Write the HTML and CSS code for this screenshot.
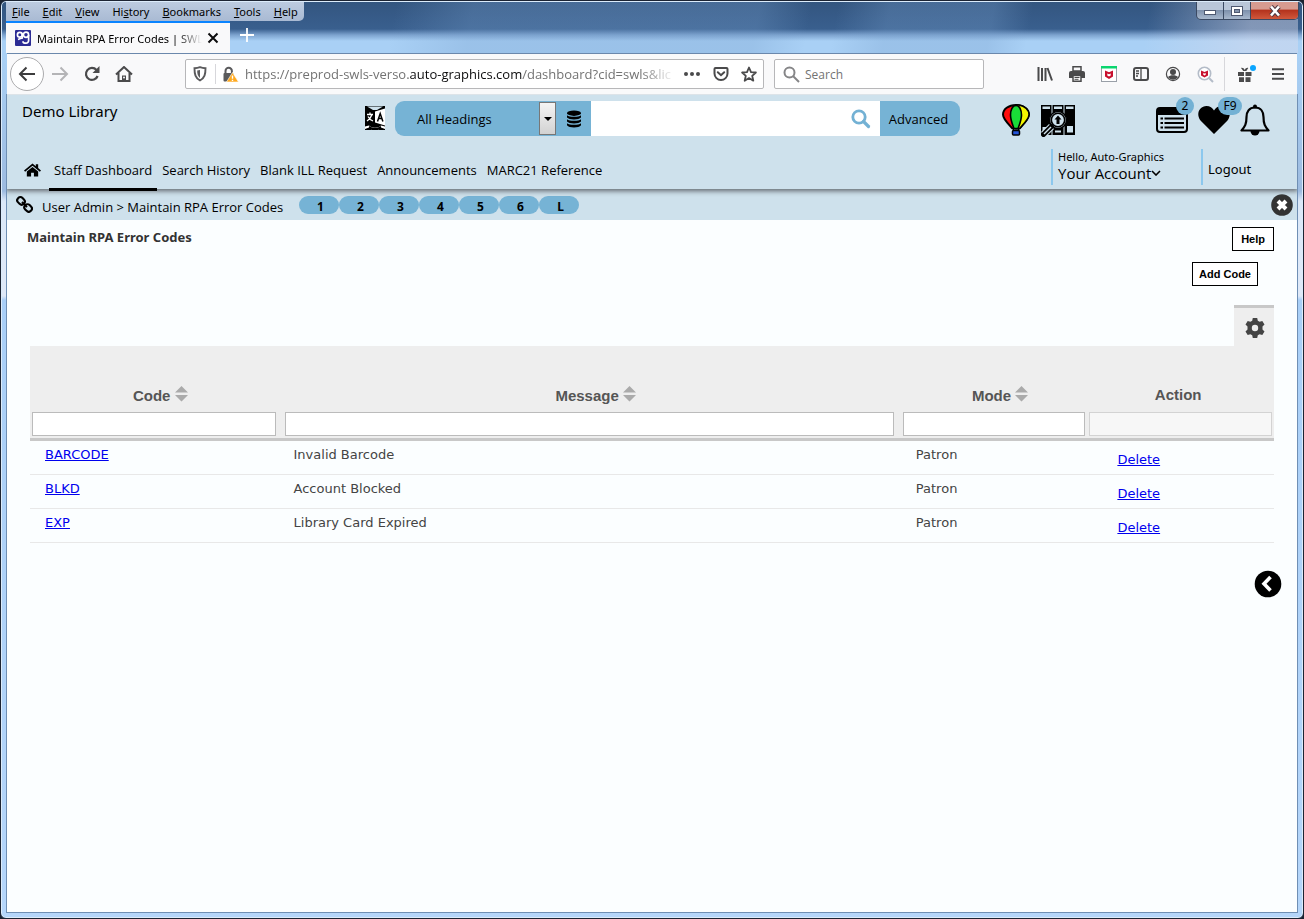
FILE: index.html
```html
<!DOCTYPE html>
<html lang="en">
<head>
<meta charset="utf-8">
<title>Maintain RPA Error Codes | SWLS</title>
<link rel="stylesheet" href="styles.css">
</head>
<body>
<div class="window">
  <div class="titlebar">
    <div class="title-left">
      <nav class="menubar" aria-label="Menu">
        <button><u>F</u>ile</button><button><u>E</u>dit</button><button><u>V</u>iew</button><button>Hi<u>s</u>tory</button><button><u>B</u>ookmarks</button><button><u>T</u>ools</button><button><u>H</u>elp</button>
      </nav>
      <div class="tabs">
        <div class="tab">
          <svg class="favicon" width="16" height="16" viewBox="0 0 16 16"><rect width="16" height="16" rx="1" fill="#2b2b94"/><g fill="none" stroke="#fff" stroke-width="1.7"><circle cx="4.8" cy="4.8" r="2.4"/><circle cx="11" cy="4.8" r="2.6"/><path d="M7 3.2c1 2.6 1 3.4-.2 4.8M13.6 5v5.500a2.600 2.600 0 0 1-2.600 2.700H9.800a2 2 0 0 1-1.800-2M3 9.500c1.500-.8 3-1.300 5-1.500"/></g></svg>
          <span class="tab-title">Maintain RPA Error Codes | SWL</span>
          <button class="tab-close" aria-label="Close tab"><svg width="12" height="12" viewBox="0 0 12 12"><path d="M1.500 1.500l9 9M10.500 1.500l-9 9" stroke="#0c0c0d" stroke-width="2"/></svg></button>
        </div>
        <button class="new-tab" aria-label="New tab"><svg width="14" height="14" viewBox="0 0 14 14"><path d="M7 0v14M0 7h14" stroke="#fff" stroke-width="1.800"/></svg></button>
      </div>
    </div>
    <div class="winbtns">
      <button aria-label="Minimize"><svg width="14" height="12" viewBox="0 0 14 12"><rect x="1.500" y="5.500" width="11" height="4" fill="#fff" stroke="#4e5870"/></svg></button>
      <button aria-label="Maximize"><svg width="14" height="12" viewBox="0 0 14 12"><rect x="1.500" y="1.500" width="11" height="9" fill="#fff" stroke="#4e5870"/><rect x="4.500" y="4.500" width="5" height="3" fill="#8493ac" stroke="#4e5870"/></svg></button>
      <button class="win-close" aria-label="Close"><svg width="14" height="12" viewBox="0 0 14 12"><path d="M3 1.500l8 9M11 1.500l-8 9" stroke="#4e3a44" stroke-width="4.600"/><path d="M3 1.500l8 9M11 1.500l-8 9" stroke="#fff" stroke-width="2.600"/></svg></button>
    </div>
  </div>

  <div class="toolbar">
    <button class="back" aria-label="Back"><svg width="18" height="16" viewBox="0 0 18 16"><path d="M17 8H2.500M8.500 1.500L2 8l6.500 6.500" fill="none" stroke="#3c3c3d" stroke-width="2"/></svg></button>
    <button class="tool" aria-label="Forward"><svg width="18" height="16" viewBox="0 0 18 16"><path d="M1 8h14.500M9.500 1.500L16 8l-6.500 6.500" fill="none" stroke="#b4b4b6" stroke-width="2"/></svg></button>
    <button class="tool" aria-label="Reload"><svg width="16" height="16" viewBox="0 0 16 16"><path d="M13.600 10A6 6 0 1 1 12.500 4" fill="none" stroke="#4a4a4b" stroke-width="2.200"/><path d="M15.500 0v7h-7z" fill="#4a4a4b"/></svg></button>
    <button class="tool" aria-label="Home"><svg width="18" height="16" viewBox="0 0 18 16"><path d="M1 8.500l8-7.500 8 7.500M3.500 7v8h11V7" fill="none" stroke="#4a4a4b" stroke-width="2"/><path d="M7 15V9.500h4V15z" fill="#4a4a4b"/><circle cx="9" cy="11.500" r="1" fill="#f9f9fa"/></svg></button>
    <div class="urlbar">
      <svg width="14" height="16" viewBox="0 0 14 16"><path d="M7 1.200c2 .8 3.600 1 5.500 1 0 6-.8 9.800-5.500 12.300C2.300 12 1.500 8.200 1.500 2.200c1.900 0 3.500-.2 5.500-1z" fill="none" stroke="#5a5a5c" stroke-width="1.900"/><path d="M7 4v8C4.800 10.500 4.200 8 4.200 4.600z" fill="#5a5a5c"/></svg>
      <span class="url-sep"></span>
      <svg width="17" height="17" viewBox="0 0 17 17"><path d="M3.500 8V5a3.200 3.200 0 0 1 6.400 0v2" fill="none" stroke="#5a5a5c" stroke-width="2"/><rect x="1.500" y="7" width="10" height="8.500" rx="1" fill="#5a5a5c"/><path d="M10.500 6.500L16.500 16h-12z" fill="#ffa91e" stroke="#fff" stroke-width=".6"/><path d="M10.500 9.500v3.300M10.500 13.800v1.200" stroke="#fff" stroke-width="1.400"/></svg>
      <span class="url-text">https://preprod-swls-verso.<b>auto-graphics.com</b>/dashboard?cid=swls&amp;lic</span>
      <svg width="18" height="6" viewBox="0 0 18 6"><g fill="#4a4a4b"><circle cx="3" cy="3" r="2"/><circle cx="9" cy="3" r="2"/><circle cx="15" cy="3" r="2"/></g></svg>
      <svg width="16" height="16" viewBox="0 0 16 16"><path d="M2.500 2h11c.6 0 1 .4 1 1v4.500a6.500 6.500 0 0 1-13 0V3c0-.6.4-1 1-1z" fill="none" stroke="#4a4a4b" stroke-width="2"/><path d="M4.800 6.200L8 9.200l3.200-3" fill="none" stroke="#4a4a4b" stroke-width="2" stroke-linecap="round"/></svg>
      <svg width="16" height="16" viewBox="0 0 16 16"><path d="M8 1.500l2 4.600 4.900.4-3.700 3.300 1.100 4.900L8 12.100l-4.300 2.600 1.100-4.900L1.100 6.500 6 6.100z" fill="none" stroke="#4a4a4b" stroke-width="1.800" stroke-linejoin="round"/></svg>
    </div>
    <div class="findbar">
      <svg width="17" height="17" viewBox="0 0 17 17"><circle cx="6.500" cy="6.500" r="5" fill="none" stroke="#858587" stroke-width="2"/><path d="M10 10l6 6" stroke="#858587" stroke-width="2"/></svg>
      <input type="text" placeholder="Search" aria-label="Search the web">
    </div>
    <div class="ext">
      <svg width="16" height="16" viewBox="0 0 16 16"><path d="M1.500 1v14M5 2v13M8.500 2v13M10.500 2l4.500 12.500" stroke="#4a4a4b" stroke-width="2"/></svg>
      <svg width="16" height="16" viewBox="0 0 16 16"><path d="M4 .7h8V5H4z" fill="none" stroke="#4a4a4b" stroke-width="1.500"/><path d="M2 5h12a2 2 0 0 1 2 2v5H0V7a2 2 0 0 1 2-2z" fill="#4a4a4b"/><path d="M4 9.500h8v5.700H4z" fill="#fff" stroke="#4a4a4b" stroke-width="1.500"/><path d="M5.500 11.500h5M5.500 13.300h4" stroke="#4a4a4b"/></svg>
      <svg width="16" height="16" viewBox="0 0 16 16"><rect x=".5" y=".5" width="15" height="15" fill="#fff" stroke="#9aa0a8"/><path d="M0 0h16v2.500H0z" fill="#0bd66f"/><path d="M4 4.500l4 1.800 4-1.800v6L8 13l-4-2.500z" fill="#c8102e"/><path d="M6.300 7.500L8 8.300l1.700-.8v2L8 10.400l-1.700-.9z" fill="#fff"/></svg>
      <svg width="16" height="14" viewBox="0 0 16 14"><rect x="1" y="1" width="14" height="12" rx="2" fill="none" stroke="#4a4a4b" stroke-width="2"/><path d="M8 1v12M3 4h3M3 6.500h3M3 9h2" stroke="#4a4a4b" stroke-width="1.300"/></svg>
      <svg width="16" height="16" viewBox="0 0 16 16"><circle cx="8" cy="8" r="6.600" fill="none" stroke="#4a4a4b" stroke-width="1.200"/><circle cx="8" cy="6" r="3" fill="#4a4a4b"/><path d="M3 11c2-2.500 8-2.500 10 0-2.500 3.500-7.500 3.500-10 0z" fill="#4a4a4b"/></svg>
      <svg width="17" height="17" viewBox="0 0 17 17"><circle cx="7.500" cy="7.500" r="6.200" fill="#fff" stroke="#b4bcc8" stroke-width="1.600"/><path d="M12 12l4 4" stroke="#b4bcc8" stroke-width="2"/><path d="M4 4.500l3.500 1.500L11 4.500v5L7.500 11.500 4 9.500z" fill="#c8102e"/><path d="M6.300 7l1.200.6L8.700 7v1.800l-1.200.7-1.200-.7z" fill="#fff"/></svg>
      <span class="ext-sep"></span>
      <svg class="gift" width="19" height="18" viewBox="0 0 19 18"><path d="M1 7h6v4H1zM8.500 7h6v4h-6zM2 12.200h5V17H2zM8.500 12.200h5V17h-5z" fill="#4a4a4b"/><path d="M4 3c1.500-.6 3 .3 3.700 2C8.400 3.300 10 2.400 11.300 3l-2 3h-3z" fill="#4a4a4b"/><circle cx="16" cy="3" r="3" fill="#0aa5ff"/></svg>
      <svg width="14" height="12" viewBox="0 0 14 12"><path d="M1 1.200h12M1 6h12M1 10.800h12" stroke="#4a4a4b" stroke-width="2"/></svg>
    </div>
  </div>

  <div class="page">
    <header class="app-head">
      <div class="head-top">
        <div class="brand">Demo Library</div>
        <button class="translate" aria-label="Translate"><svg width="22" height="26" viewBox="0 0 22 26"><path d="M1 1h20v24H1z"/><path d="M3 1.500h16L13 5H9z" fill="#cee1ec"/><path d="M11 6.500l10-3v17l-10-3z" fill="#fff"/><path d="M1 21.500l4-1c3 3 9 3 12 0l4 1V24l-4-1.500-3 2.500H8l-3-2.500L1 24z" fill="#fff"/><path d="M5 21c4 2.500 8 2.500 12 0v2.500l-3 1.500H8l-3-1.500z"/><path d="M13.500 16.500l2.700-8 2.700 8M14.500 13.500h3.500" fill="none" stroke="#000" stroke-width="1.500"/><path d="M3 9.500h6M6 7.500v2M8 9.500c-1 3-2.500 5-5 6.500M4 11.500c1 2 2.500 3.500 5 4.500" fill="none" stroke="#fff" stroke-width="1.300"/></svg></button>
        <form class="search">
          <button type="button" class="headings">All Headings<span class="drop"></span></button>
          <button type="button" class="db" aria-label="Databases"><svg width="16" height="18" viewBox="0 0 16 18"><ellipse cx="8" cy="3.200" rx="7" ry="2.700"/><path d="M1 5.200c2 2.200 12 2.200 14 0v2.300c-2 2.600-12 2.600-14 0zM1 9.200c2 2.200 12 2.200 14 0v2.300c-2 2.600-12 2.600-14 0zM1 13.200c2 2.200 12 2.200 14 0v2c-2 3-12 3-14 0z"/></svg></button>
          <input type="text" aria-label="Catalog search">
          <button type="button" class="go" aria-label="Search"><svg width="20" height="20" viewBox="0 0 20 20"><circle cx="8" cy="8" r="6.200" fill="none" stroke="#73b1d4" stroke-width="2.800"/><path d="M12.500 12.500l5 5" stroke="#73b1d4" stroke-width="3.200" stroke-linecap="round"/></svg></button>
          <button type="button" class="advanced">Advanced</button>
        </form>
        <div class="icons-a">
          <svg width="28" height="32" viewBox="0 0 28 32"><path d="M14 1C6.500 1 1 5.200 1 10.500c0 4.500 4.500 8.500 9.500 14h7c5-5.500 9.500-9.500 9.500-14C27 5.200 21.500 1 14 1z" fill="#ff0d0d" stroke="#000" stroke-width="2"/><path d="M14 1h3c6 1 10 5 10 9.500 0 4.500-4.500 8.500-9.500 14H14z" fill="#f3f500" stroke="#000" stroke-width="1.500"/><path d="M14 1.500c-3.500 0-5.500 4.500-5.500 9.500 0 5 2 9.500 3.500 13.500h4c1.500-4 3.500-8.500 3.500-13.500 0-5-2-9.500-5.500-9.500z" fill="#19dc37" stroke="#000" stroke-width="1.600"/><path d="M11.500 24v3M16.500 24v3" stroke="#000"/><rect x="10.500" y="26.500" width="7" height="4.500" rx="1" fill="#2353d8" stroke="#000" stroke-width="1.500"/></svg>
          <svg width="34" height="33" viewBox="0 0 34 33"><path d="M0 1h10.500v30H0zM11.500 1h11v30h-11zM23.500 1H34v30H23.500z"/><path d="M1.500 2.500H9V5H1.500zM13 2.500h8V5h-8zM25 2.500h7.500V5H25zM1.500 23H7v5H1.500zM26 22h6v6.500h-6zM14 26.500h6v2h-6z" fill="#cee1ec"/><circle cx="17" cy="16" r="8.500" fill="#cee1ec" stroke="#000" stroke-width="1.500"/><circle cx="17" cy="16" r="6.700" fill="#cee1ec" stroke="#000" stroke-width="1.600"/><path d="M17 11.500l3.500 4h-2V20h-3v-4.500h-2z"/><path d="M10.500 22.500L2.500 30.500" stroke="#cee1ec" stroke-width="7"/><path d="M10.500 22.500L2.500 30.500" stroke="#000" stroke-width="5" stroke-linecap="round"/><path d="M10 23l-7 7" stroke="#cee1ec" stroke-width="1.500"/></svg>
        </div>
        <div class="icons-b">
          <button class="badged" aria-label="Lists"><svg width="32" height="26" viewBox="0 0 32 26"><rect x="1" y="1" width="30" height="24" rx="3" fill="none" stroke="#000" stroke-width="2"/><path d="M1 3q0-2 2-2h26q2 0 2 2v5H1z"/><path d="M8.500 11.500H28M8.500 16H28M8.500 20.500H28" stroke="#000" stroke-width="2"/><path d="M4.500 11.500h2.500M4.500 16h2.500M4.500 20.500h2.500" stroke="#000" stroke-width="2"/></svg><span class="badge">2</span></button>
          <button class="badged heart" aria-label="Favorites"><svg width="32" height="28" viewBox="0 0 32 28"><path d="M16 28L2.500 14.500C-2.500 8 1.500 0 8.500 0 12 0 14.500 1.800 16 4.500 17.500 1.800 20 0 23.500 0c7 0 11 8 6 14.500z"/></svg><span class="badge wide">F9</span></button>
          <button class="badged" aria-label="Notifications"><svg width="30" height="32" viewBox="0 0 30 32"><path d="M15 3.500c-6 0-8.500 4.500-8.500 9.500 0 7-1.500 9.500-5 13.500h27c-3.500-4-5-6.500-5-13.500 0-5-2.500-9.500-8.500-9.500z" fill="none" stroke="#000" stroke-width="2.200" stroke-linejoin="round"/><circle cx="15" cy="2.500" r="2"/><path d="M10.500 27h9a4.500 4.500 0 0 1-9 0z"/></svg></button>
        </div>
      </div>
      <div class="head-nav">
        <nav class="links" aria-label="Main">
          <a class="home" href="#" aria-label="Home"><svg width="17" height="14" viewBox="0 0 18 14"><path d="M9 0L0 7.500l1.200 1.300L9 2.400l7.800 6.400L18 7.500l-3-2.500V.8h-2.500V3z"/><path d="M9 3.800L3 8.700V14h4.500V9.800h3V14H15V8.700z"/></svg></a>
          <a class="current" href="#">Staff Dashboard</a><a href="#">Search History</a><a href="#">Blank ILL Request</a><a href="#">Announcements</a><a href="#">MARC21 Reference</a>
        </nav>
        <div class="account"><span class="hello">Hello, Auto-Graphics</span><a href="#">Your Account<svg width="10" height="6" viewBox="0 0 10 6"><path d="M1 1l4 4 4-4" fill="none" stroke="#000" stroke-width="1.600"/></svg></a></div>
        <div class="logout"><a href="#">Logout</a></div>
      </div>
    </header>

    <div class="crumbs">
      <svg width="17" height="17" viewBox="0 0 17 17"><g fill="none" stroke="#000" stroke-width="2.100" transform="rotate(45 8.500 8.500)"><rect x="-.5" y="5.300" width="8" height="6.200" rx="3"/><rect x="9.500" y="5.300" width="8" height="6.200" rx="3"/><path d="M5 8.500h7"/></g></svg>
      <span class="trail"><a href="#">User Admin</a> &gt; <a href="#">Maintain RPA Error Codes</a></span>
      <div class="pills"><button>1</button><button>2</button><button>3</button><button>4</button><button>5</button><button>6</button><button>L</button></div>
      <button class="close" aria-label="Close"><svg width="22" height="22" viewBox="0 0 22 22"><circle cx="11" cy="11" r="10.800" fill="#333"/><path d="M7 7l8 8M15 7l-8 8" stroke="#fff" stroke-width="4"/></svg></button>
    </div>

    <main class="content">
      <div class="title-row"><h1>Maintain RPA Error Codes</h1><button class="box">Help</button></div>
      <div class="add-row"><button class="box">Add Code</button></div>
      <div class="gear-row"><button class="gear" aria-label="Table settings"><svg width="20" height="20" viewBox="0 0 20 20"><path fill="#444" fill-rule="evenodd" d="M7.800 0h4.400l.6 2.700 1.800 1 2.700-.8 2.200 3.700-2 2v2.800l2 2-2.200 3.700-2.700-.8-1.800 1-.6 2.700H7.800l-.6-2.700-1.800-1-2.700.8-2.200-3.700 2-2V8.600l-2-2 2.200-3.700 2.700.8 1.800-1zM10 6.800a3.200 3.200 0 1 0 0 6.400 3.200 3.200 0 0 0 0-6.400z"/></svg></button></div>
      <table class="codes">
        <colgroup><col class="c-code"><col class="c-msg"><col class="c-mode"><col class="c-act"></colgroup>
        <thead>
          <tr class="names">
            <th>Code <svg width="13" height="16" viewBox="0 0 13 16"><path d="M6.500 0L13 6.500H0zM0 9h13l-6.500 6.500z" fill="#aaa"/></svg></th>
            <th>Message <svg width="13" height="16" viewBox="0 0 13 16"><path d="M6.500 0L13 6.500H0zM0 9h13l-6.500 6.500z" fill="#aaa"/></svg></th>
            <th class="mode">Mode <svg width="13" height="16" viewBox="0 0 13 16"><path d="M6.500 0L13 6.500H0zM0 9h13l-6.500 6.500z" fill="#aaa"/></svg></th>
            <th class="plain">Action</th>
          </tr>
          <tr class="filters">
            <td><input type="text" aria-label="Filter code"></td>
            <td><input type="text" aria-label="Filter message"></td>
            <td class="tight"><input type="text" aria-label="Filter mode"></td>
            <td class="tight"><input type="text" aria-label="Filter action" disabled></td>
          </tr>
        </thead>
        <tbody>
          <tr><td><a href="#">BARCODE</a></td><td>Invalid Barcode</td><td>Patron</td><td class="act"><a href="#">Delete</a></td></tr>
          <tr><td><a href="#">BLKD</a></td><td>Account Blocked</td><td>Patron</td><td class="act"><a href="#">Delete</a></td></tr>
          <tr><td><a href="#">EXP</a></td><td>Library Card Expired</td><td>Patron</td><td class="act"><a href="#">Delete</a></td></tr>
        </tbody>
      </table>
      <div class="side-row"><button aria-label="Open side panel"><svg width="28" height="28" viewBox="0 0 28 28"><circle cx="14" cy="14" r="13.300"/><path d="M16.500 7L10 13.800l6.500 6.800" fill="none" stroke="#fff" stroke-width="3.600"/></svg></button></div>
    </main>
  </div>
</div>
</body>
</html>
```
FILE: styles.css
```css
* { box-sizing: border-box; }
body {
  margin: 0;
  min-height: 100vh;
  display: flex;
  background: #1a2230;
  font-family: "Noto Sans", "Open Sans", sans-serif;
  font-size: 12px;
  color: #000;
}
button { border: 0; padding: 0; background: none; font: inherit; color: inherit; }
svg { display: block; flex: none; }
a { color: inherit; text-decoration: none; }

.window {
  flex: 1;
  display: flex;
  flex-direction: column;
  padding: 0 5px 5px;
  border: 1px solid #1c2433;
  border-radius: 6px;
  box-shadow: inset 0 0 0 1px #dcecfb;
  background: linear-gradient(#33557f 0, #395f8e 28px, #7da3cf 34px, #a9d0f5 40px, #a9d0f5 56px, #9dbbe0 190px, #dbe8f8 200px, #dfe9f8 295px, #a9cff7 299px, #b5d6fa 100%);
}

/* window chrome */
.titlebar {
  display: flex;
  justify-content: space-between;
  align-items: flex-start;
  height: 51px;
  margin-top: 1px;
  background: linear-gradient(100deg, transparent 0 30%, rgba(120, 160, 205, .3) 36% 58%, transparent 62% 64%, rgba(120, 160, 205, .3) 68% 76%, transparent 79% 88%, rgba(220, 220, 235, .45) 96%);
}
.title-left { display: flex; flex-direction: column; height: 51px; }
.menubar {
  display: flex;
  gap: 1px;
  align-self: flex-start;
  height: 19px;
  border-radius: 0 0 5px 0;
  background: linear-gradient(#bccbe0, #a9bad3);
}
.menubar button { padding: 0 6px; line-height: 17px; font-size: 11px; }
.tabs { display: flex; flex: 1; }
.tab {
  display: flex;
  align-items: center;
  width: 224px;
  padding: 0 11px 0 9px;
  border-top: 2px solid #0a84ff;
  background: #f9f9fa;
  font-size: 11px;
}
.tab-title {
  flex: 1;
  margin-left: 6px;
  white-space: nowrap;
  overflow: hidden;
  mask-image: linear-gradient(90deg, #000 85%, transparent 100%);
}
.tab-close { margin-left: 5px; }
.new-tab { width: 32px; padding: 0 0 4px 10px; }
.winbtns {
  display: flex;
  height: 18px;
  margin-right: -1px;
  border: 1px solid #3b4a63;
  border-top: 0;
  border-radius: 0 0 5px 5px;
  overflow: hidden;
  background: linear-gradient(#b9c6d8 45%, #7f92ad 50%, #a8b8cd);
}
.winbtns button { display: flex; align-items: center; justify-content: center; width: 27px; border-right: 1px solid #3b4a63; }
.winbtns .win-close { width: 47px; border: 0; background: linear-gradient(#d79b90 40%, #b5341e 50%, #d0583c); }

.toolbar {
  display: flex;
  align-items: center;
  height: 41px;
  margin: 0 1px;
  padding: 0 12px 0 3px;
  border-top: 1px solid #6b88ac;
  background: #f9f9fa;
}
.back {
  display: flex;
  align-items: center;
  justify-content: center;
  width: 34px;
  height: 34px;
  border: 1px solid #ababad;
  border-radius: 50%;
  background: #fff;
}
.tool { width: 32px; display: flex; justify-content: center; }
.urlbar, .findbar {
  display: flex;
  align-items: center;
  height: 30px;
  border: 1px solid #b7b7b9;
  border-radius: 2px;
  background: #fff;
  font-family: "Open Sans", sans-serif;
}
.urlbar { flex: 1; gap: 12px; margin-left: 45px; padding: 0 6px 0 7px; }
.url-sep { flex: none; width: 1px; height: 20px; margin: 0 -6px 0 -4px; background: #d7d7db; }
.url-text {
  flex: 1;
  width: 0;
  margin: 0 -4px 0 -6px;
  overflow: hidden;
  white-space: nowrap;
  color: #737373;
  font-size: 13px;
  mask-image: linear-gradient(90deg, #000 92%, transparent 100%);
}
.url-text b { font-weight: 400; color: #0c0c0d; }
.findbar { width: 210px; margin-left: 10px; padding: 0 8px; gap: 5px; }
.findbar input { flex: 1; width: 0; border: 0; padding: 0; background: none; font: inherit; font-size: 12px; }
.findbar input::placeholder { color: #737373; }
.ext { display: flex; align-items: center; gap: 16px; margin-left: 53px; }
.ext-sep { width: 1px; height: 34px; margin: 0 -4px 0 -6px; background: #d7d7db; }
.gift { margin-right: -1px; }

/* application header */
.page {
  flex: 1;
  display: flex;
  flex-direction: column;
  border: 1px solid #6f8fb4;
  border-top: 0;
  background: #fbfeff;
}
.app-head { position: relative; background: #cee1ec; border-top: 1px solid #dde3e8; box-shadow: 0 1px 5px 1px #60666c; clip-path: inset(0 0 -8px 0); }
.head-top { display: flex; align-items: flex-start; height: 51px; padding: 6px 27px 0 15px; }
.brand { width: 342px; font-size: 15px; line-height: 20px; }
.translate { padding-top: 4px; }
.search { display: flex; flex: 1; height: 35px; margin: 0 0 0 9px; font-family: "Open Sans", sans-serif; font-size: 13px; }
.headings {
  display: flex;
  align-items: center;
  justify-content: space-between;
  width: 162px;
  padding: 1px 1px 1px 22px;
  border-radius: 9px 0 0 9px;
  background: #76b3d5;
}
.drop {
  display: flex;
  align-items: center;
  justify-content: center;
  align-self: stretch;
  width: 17px;
  border: 1px solid #777;
  background: linear-gradient(#f4f4f4, #d2d2d2);
}
.drop::after { content: ""; border: 4px solid transparent; border-top-color: #000; border-bottom: 0; }
.db { width: 34px; padding-left: 9px; background: #76b3d5; }
.search input { flex: 1; width: 0; border: 0; background: #fff; font: inherit; }
.go { padding: 0 9px; background: #fff; }
.advanced { width: 80px; padding-right: 3px; border-radius: 0 9px 9px 0; background: #76b3d5; }
.icons-a { display: flex; gap: 11px; margin: 3px 0 0 42px; }
.icons-b { display: flex; gap: 10px; margin: 3px 0 0 81px; }
.badged { position: relative; }
.badge {
  position: absolute;
  top: -7px;
  right: -6px;
  min-width: 18px;
  height: 18px;
  border-radius: 9px;
  background: #73b1d4;
  line-height: 18px;
}
.badge.wide { width: 24px; right: -12px; }

.head-nav { display: flex; height: 43px; padding-left: 17px; }
.links { display: flex; flex: 1; font-family: "Open Sans", sans-serif; font-size: 13px; }
.links a { padding: 16px 5px 0; line-height: 16px; white-space: nowrap; }
.links .home { padding: 17px 8px 0 0; }
.links .current { border-bottom: 3px solid #000; margin-bottom: -2px; }
.account, .logout { height: 36px; margin-top: 3px; padding-left: 5px; border-left: 2px solid #8cc8ee; white-space: nowrap; }
.account { width: 150px; line-height: 16px; font-size: 14px; }
.account a { display: flex; align-items: center; font-size: 15px; font-family: "Open Sans", sans-serif; }
.hello { display: block; font-size: 11px; }
.logout { width: 96px; font-size: 13px; line-height: 40px; }

.crumbs { display: flex; align-items: center; height: 31px; padding: 0 4px 0 9px; background: #cee1ec; }
.trail { flex: none; width: 257px; padding: 4px 0 0 9px; white-space: nowrap; font-family: "Open Sans", sans-serif; font-size: 13px; }
.pills { display: flex; flex: 1; margin-left: 9px; }
.pills button { width: 40px; height: 18px; padding: 3px 0 0 3px; border-radius: 9px; background: #76b3d5; line-height: 15px; font-weight: 700; }

/* page content */
.content { padding: 7px 23px 0; }
.title-row { display: flex; justify-content: space-between; }
h1 { margin: 0 0 0 -3px; line-height: 20px; font-size: 13px; color: #333; }
.box {
  height: 24px;
  padding: 0 8px;
  border: 1px solid #000;
  background: #fff;
  font: 700 11px "Liberation Sans", Arial, sans-serif;
}
.add-row { display: flex; justify-content: flex-end; padding: 11px 16px 0 0; }
.add-row .box { padding: 0 6px; }
.gear-row { display: flex; justify-content: flex-end; margin-top: 19px; }
.gear { display: flex; align-items: center; justify-content: center; width: 40px; height: 41px; padding: 2px 0 0 1px; border-top: 3px solid #c8c8c8; background: #eee; }

.codes { width: 100%; border-spacing: 0; table-layout: fixed; font-family: "DejaVu Sans", Verdana, sans-serif; font-size: 13px; color: #444; }
.c-code { width: 20.3%; }
.c-msg { width: 49.7%; }
.c-mode { width: 15%; }
.c-act { width: 15%; }
.codes thead { background: #eee; }
.names th { height: 64px; padding: 0 0 6px 8px; vertical-align: bottom; font: 700 15px "Liberation Sans", Arial, sans-serif; color: #555; }
.names th.mode { padding-left: 12px; }
.names th.plain { padding: 0 5px 7px 0; }
.names svg { display: inline-block; vertical-align: -1px; }
.filters td { padding: 2px 7px 2px 2px; border-bottom: 3px solid #c8c8c8; }
.filters td.tight { padding-right: 2px; }
.filters input { display: block; width: 100%; height: 24px; border: 1px solid #bbb; background: #fff; }
.filters input:disabled { border-color: #d3d3d3; background: #f7f7f7; }
.codes tbody td { height: 34px; padding: 6px 0 0 15px; border-bottom: 1px solid #e8e8e8; vertical-align: top; line-height: 16px; }
.codes tbody td:nth-child(2) { padding-left: 11px; }
.codes tbody td.act { padding: 11px 0 0 30px; }
.codes tbody a { color: #0000ee; text-decoration: underline; }
.side-row { display: flex; justify-content: flex-end; margin: 27px -8px 0 0; }
```
